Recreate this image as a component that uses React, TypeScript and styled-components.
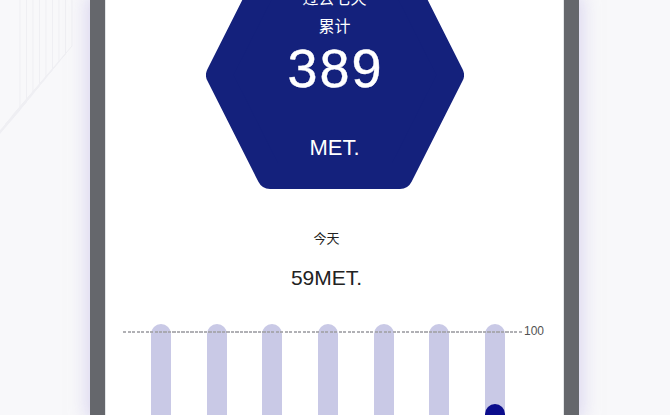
import styled, { createGlobalStyle } from "styled-components"

const GlobalStyle = createGlobalStyle`
  html, body {
    margin: 0;
    padding: 0;
    background: #f8f8fa;
  }
  body {
    font-family: "Liberation Sans", "Noto Sans CJK SC", sans-serif;
  }
`

const Page = styled.div`
  position: relative;
  width: 670px;
  height: 415px;
  overflow: hidden;
  background: #f8f8fa;
  display: flex;
  justify-content: flex-start;
  padding-left: 90px;
  box-sizing: border-box;
`

const Pattern = styled.svg`
  position: absolute;
  left: 0;
  top: 0;
`

const Phone = styled.div`
  position: relative;
  width: 459px;
  height: 415px;
  flex: none;
  border-left: 15px solid #65676c;
  border-right: 15px solid #65676c;
  background: #ffffff;
  box-shadow: 0 0 16px 4px rgba(196, 190, 232, 0.55);
  overflow: hidden;
`

const Screen = styled.div`
  display: flex;
  flex-direction: column;
  align-items: center;
  margin-top: -39px;
  box-shadow: inset 1px 0 0 #e3e6e8, inset -1px 0 0 #e3e6e8;
`

const Hexagon = styled.div`
  position: relative;
  width: 258px;
  height: 228px;
  display: flex;
  flex-direction: column;
  align-items: center;
  color: #ffffff;
  padding-top: 22px;
  box-sizing: border-box;
`

const HexShape = styled.svg`
  position: absolute;
  inset: 0;
  z-index: 0;
`

const HexLabel = styled.div`
  position: relative;
  font-family: "Noto Sans CJK SC", sans-serif;
  font-size: 16px;
  line-height: 28px;
`

const BigNumber = styled.div`
  position: relative;
  font-size: 54px;
  line-height: 53px;
  letter-spacing: 2px;
  margin-top: 3px;
  margin-left: 2px;
  -webkit-text-stroke: 0.4px #ffffff;
`

const Unit = styled.div`
  position: relative;
  font-size: 22px;
  line-height: 22px;
  margin-top: 42px;
`

const Today = styled.div`
  display: flex;
  flex-direction: column;
  align-items: center;
  margin-top: 39px;
  padding-right: 16px;
  color: #222222;
`

const TodayLabel = styled.div`
  font-family: "Noto Sans CJK SC", sans-serif;
  font-size: 13px;
  line-height: 20px;
`

const TodayValue = styled.div`
  font-size: 21px;
  line-height: 24px;
  margin-top: 18px;
`

const Chart = styled.div`
  position: relative;
  align-self: flex-start;
  margin-left: 18px;
  margin-top: 34px;
  width: 400px;
  padding-left: 10px;
  box-sizing: border-box;
  display: grid;
  grid-template-columns: repeat(7, 1fr);
`

const Column = styled.div`
  display: flex;
  justify-content: center;
`

const Bar = styled.div`
  position: relative;
  width: 20px;
  height: 185px;
  border-radius: 10px;
  background: #c9c9e6;
  overflow: hidden;
`

const Fill = styled.div`
  position: absolute;
  left: 0;
  right: 0;
  bottom: 0;
  border-radius: 10px;
  background: #0b0d8c;
`

const GoalLine = styled.div`
  position: absolute;
  left: 0;
  right: 0;
  top: 7px;
  height: 2px;
  background: repeating-linear-gradient(to right, #a3a3a8 0 3px, transparent 3px 4.5px);
  opacity: 0.85;
`

const GoalLabel = styled.span`
  position: absolute;
  left: calc(100% + 1px);
  top: -7px;
  font-size: 12px;
  line-height: 14px;
  color: #333333;
`

const days = [0, 0, 0, 0, 0, 0, 59]

function BackgroundLines() {
  const lines = Array.from({ length: 9 }, (_, i) => {
    const x = 20 + i * 6.5
    const y = 110 - i * 8
    return `${x},0 ${x},${y} ${x - 60},${y + 70}`
  })
  return (
    <Pattern width="90" height="200" viewBox="0 0 90 200">
      {lines.map((p, i) => (
        <polyline key={i} points={p} fill="none" stroke="#efeff3" strokeWidth="1" />
      ))}
    </Pattern>
  )
}

export default function App() {
  return (
    <>
      <GlobalStyle />
      <Page>
        <BackgroundLines />
        <Phone>
          <Screen>
            <Hexagon>
              <HexShape width="258" height="228" viewBox="0 0 258 228">
                <polygon
                  points="13,114 64,13 194,13 245,114 194,215 64,215"
                  fill="#14217c"
                  stroke="#14217c"
                  strokeWidth="26"
                  strokeLinejoin="round"
                />
              </HexShape>
              <HexLabel>过去七天</HexLabel>
              <HexLabel>累计</HexLabel>
              <BigNumber>389</BigNumber>
              <Unit>MET.</Unit>
            </Hexagon>

            <Today>
              <TodayLabel>今天</TodayLabel>
              <TodayValue>59MET.</TodayValue>
            </Today>

            <Chart>
              {days.map((v, i) => (
                <Column key={i}>
                  <Bar>
                    {v > 0 && <Fill style={{ height: `${(v / 100) * 178}px` }} />}
                  </Bar>
                </Column>
              ))}
              <GoalLine>
                <GoalLabel>100</GoalLabel>
              </GoalLine>
            </Chart>
          </Screen>
        </Phone>
      </Page>
    </>
  )
}
